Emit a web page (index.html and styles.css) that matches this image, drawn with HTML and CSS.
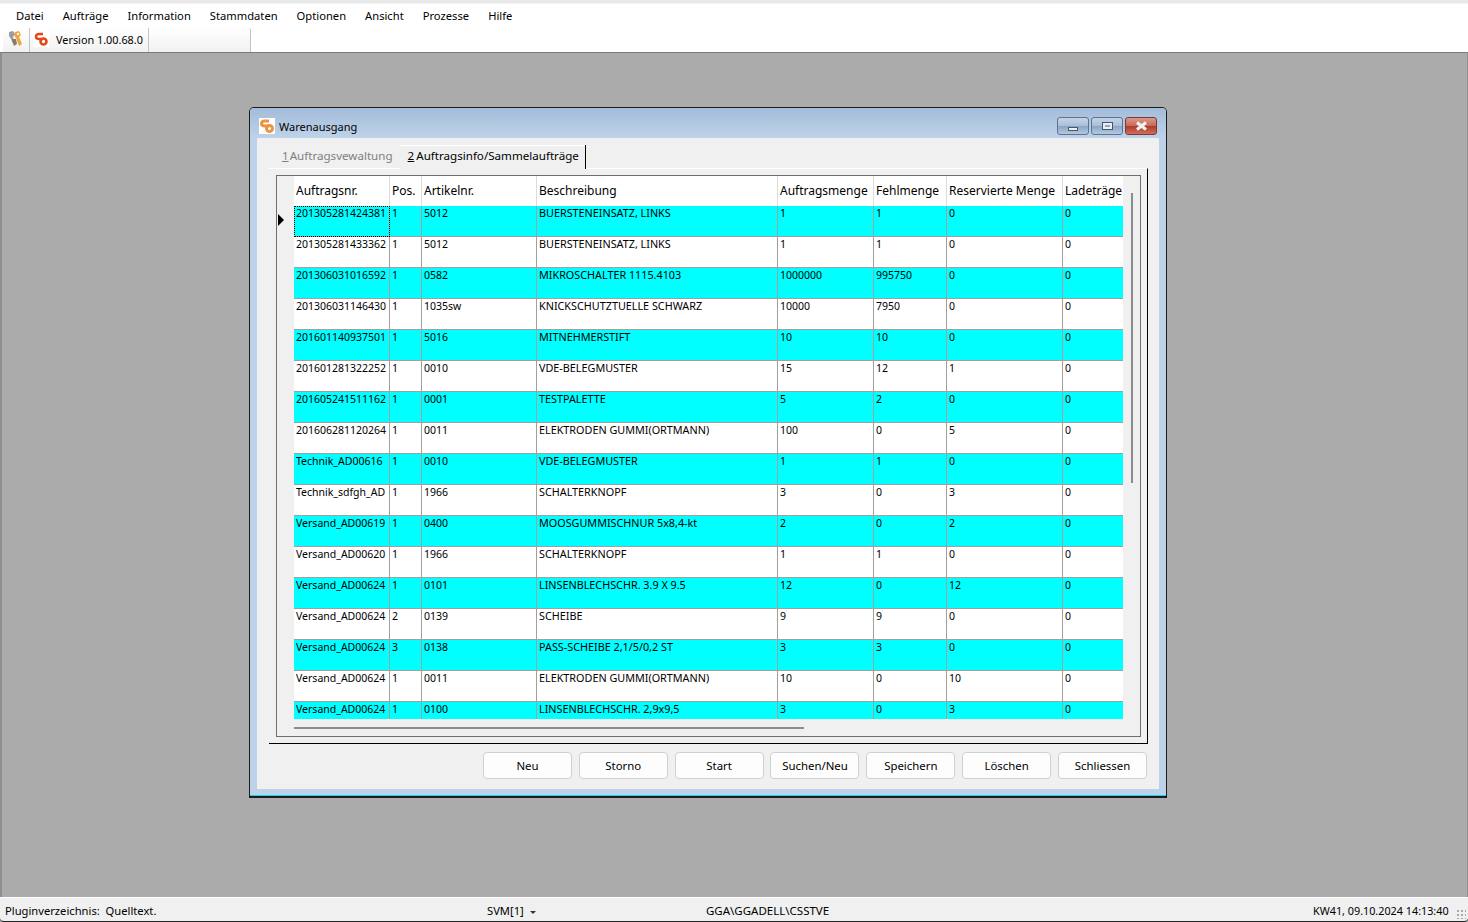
FILE: index.html
```html
<!DOCTYPE html>
<html lang="de">
<head>
    <meta charset="UTF-8">
    <title>Warenausgang</title>
    <link rel="stylesheet" href="styles.css">
</head>
<body>
    <!-- Menu -->
    <div class="menubar">
        <span>Datei</span><span>Aufträge</span><span>Information</span><span>Stammdaten</span>
        <span>Optionen</span><span>Ansicht</span><span>Prozesse</span><span>Hilfe</span>
    </div>

    <!-- Toolbar -->
    <div class="toolbar">
        <div class="toolstrip">
            <div class="toolcell first">
                <svg width="15" height="16" viewBox="0 0 15 16">
                    <path d="M1 1 L5 0 L7 3 L5 6 L7 12 L5 13 L3 8 L1 5 Z" fill="#9a9aa8"/>
                    <path d="M7 1 L11 0 L13 4 L11 6 L14 13 L11 15 L8 7 L6 4 Z" fill="#eda63e"/>
                    <path d="M4 8 L8 8 L9 13 L6 15 Z" fill="#8c7a62"/>
                    <path d="M9 2 L11 2 L11 4 L9 4 Z" fill="#fff"/>
                </svg>
            </div>
            <div class="toolcell version">
                <svg width="16" height="16" viewBox="0 0 16 16">
                    <rect width="16" height="16" fill="#fff"/>
                    <path d="M10 3 H6 Q3 3 3 5.5 Q3 8 6 8 H10" fill="none" stroke="#e2481c" stroke-width="2.6"/>
                    <circle cx="10.5" cy="10.5" r="3" fill="none" stroke="#e2481c" stroke-width="2.6"/>
                </svg>
                <span>Version 1.00.68.0</span>
            </div>
        </div>
    </div>

    <!-- MDI area -->
    <div class="mdi">
        <div class="window">
            <div class="titlebar">
                <svg class="appicon" width="16" height="16" viewBox="0 0 16 16">
                    <rect width="16" height="16" fill="#fff"/>
                    <path d="M10 3 H6 Q2.5 3 2.5 5.5 Q2.5 8 6 8 H10" fill="none" stroke="#ee9440" stroke-width="3"/>
                    <circle cx="10.5" cy="10.5" r="3" fill="none" stroke="#ee9440" stroke-width="3"/>
                </svg>
                <span class="title">Warenausgang</span>
                <div class="winbtns">
                    <div class="winbtn"><i class="min"></i></div>
                    <div class="winbtn"><i class="max"></i></div>
                    <div class="winbtn close">
                        <svg width="15" height="10" viewBox="0 0 15 10"><path d="M3 1.5 L12 8.5 M12 1.5 L3 8.5" stroke="#f2f2f2" stroke-width="3"/></svg>
                    </div>
                </div>
            </div>
            <div class="winbody">
                <div class="tabs">
                    <div class="tab"><u>1</u>Auftragsvewaltung</div>
                    <div class="tab active"><u>2</u>Auftragsinfo/Sammelaufträge</div>
                </div>
                <div class="tabpage">
                    <div class="grid">
                        <div class="rowhead"><i class="arrow"></i></div>
                        <div class="gridclip">
                            <table>
                                <colgroup>
                                    <col class="c1"><col class="c2"><col class="c3"><col class="c4">
                                    <col class="c5"><col class="c6"><col class="c7"><col class="c8">
                                </colgroup>
                                <thead>
                                    <tr><th>Auftragsnr.</th><th>Pos.</th><th>Artikelnr.</th><th>Beschreibung</th><th>Auftragsmenge</th><th>Fehlmenge</th><th>Reservierte Menge</th><th>Ladeträge</th></tr>
                                </thead>
                                <tbody>
                                    <tr class="hl"><td class="focus">201305281424381</td><td>1</td><td>5012</td><td>BUERSTENEINSATZ, LINKS</td><td>1</td><td>1</td><td>0</td><td>0</td></tr>
                                    <tr><td>201305281433362</td><td>1</td><td>5012</td><td>BUERSTENEINSATZ, LINKS</td><td>1</td><td>1</td><td>0</td><td>0</td></tr>
                                    <tr class="hl"><td>201306031016592</td><td>1</td><td>0582</td><td>MIKROSCHALTER 1115.4103</td><td>1000000</td><td>995750</td><td>0</td><td>0</td></tr>
                                    <tr><td>201306031146430</td><td>1</td><td>1035sw</td><td>KNICKSCHUTZTUELLE SCHWARZ</td><td>10000</td><td>7950</td><td>0</td><td>0</td></tr>
                                    <tr class="hl"><td>201601140937501</td><td>1</td><td>5016</td><td>MITNEHMERSTIFT</td><td>10</td><td>10</td><td>0</td><td>0</td></tr>
                                    <tr><td>201601281322252</td><td>1</td><td>0010</td><td>VDE-BELEGMUSTER</td><td>15</td><td>12</td><td>1</td><td>0</td></tr>
                                    <tr class="hl"><td>201605241511162</td><td>1</td><td>0001</td><td>TESTPALETTE</td><td>5</td><td>2</td><td>0</td><td>0</td></tr>
                                    <tr><td>201606281120264</td><td>1</td><td>0011</td><td>ELEKTRODEN GUMMI(ORTMANN)</td><td>100</td><td>0</td><td>5</td><td>0</td></tr>
                                    <tr class="hl"><td>Technik_AD00616</td><td>1</td><td>0010</td><td>VDE-BELEGMUSTER</td><td>1</td><td>1</td><td>0</td><td>0</td></tr>
                                    <tr><td>Technik_sdfgh_AD</td><td>1</td><td>1966</td><td>SCHALTERKNOPF</td><td>3</td><td>0</td><td>3</td><td>0</td></tr>
                                    <tr class="hl"><td>Versand_AD00619</td><td>1</td><td>0400</td><td>MOOSGUMMISCHNUR 5x8,4-kt</td><td>2</td><td>0</td><td>2</td><td>0</td></tr>
                                    <tr><td>Versand_AD00620</td><td>1</td><td>1966</td><td>SCHALTERKNOPF</td><td>1</td><td>1</td><td>0</td><td>0</td></tr>
                                    <tr class="hl"><td>Versand_AD00624</td><td>1</td><td>0101</td><td>LINSENBLECHSCHR. 3.9 X 9.5</td><td>12</td><td>0</td><td>12</td><td>0</td></tr>
                                    <tr><td>Versand_AD00624</td><td>2</td><td>0139</td><td>SCHEIBE</td><td>9</td><td>9</td><td>0</td><td>0</td></tr>
                                    <tr class="hl"><td>Versand_AD00624</td><td>3</td><td>0138</td><td>PASS-SCHEIBE 2,1/5/0,2 ST</td><td>3</td><td>3</td><td>0</td><td>0</td></tr>
                                    <tr><td>Versand_AD00624</td><td>1</td><td>0011</td><td>ELEKTRODEN GUMMI(ORTMANN)</td><td>10</td><td>0</td><td>10</td><td>0</td></tr>
                                    <tr class="hl"><td>Versand_AD00624</td><td>1</td><td>0100</td><td>LINSENBLECHSCHR. 2,9x9,5</td><td>3</td><td>0</td><td>3</td><td>0</td></tr>
                                </tbody>
                            </table>
                        </div>
                        <div class="vscroll"></div>
                        <div class="hscroll"></div>
                    </div>
                </div>
                <div class="buttons">
                    <button>Neu</button>
                    <button>Storno</button>
                    <button>Start</button>
                    <button>Suchen/Neu</button>
                    <button>Speichern</button>
                    <button>Löschen</button>
                    <button>Schliessen</button>
                </div>
            </div>
        </div>
    </div>

    <!-- Status bar -->
    <div class="statusbar">
        <span class="st-left">Pluginverzeichnis:&nbsp; Quelltext.</span>
        <span class="st-svm">SVM[1] <i class="caret"></i></span>
        <span class="st-user">GGA\GGADELL\CSSTVE</span>
        <span class="st-time">KW41, 09.10.2024 14:13:40</span>
        <span class="grip"></span>
    </div>
</body>
</html>
```

FILE: styles.css
```css
/* General styles */
body {
    margin: 0;
    height: 922px;
    overflow: hidden;
    display: flex;
    flex-direction: column;
    font-family: "Noto Sans", sans-serif;
    font-size: 11.2px;
    color: #000;
    background: #ababab;
}

/* Menu */
.menubar {
    height: 28px;
    box-sizing: border-box;
    padding: 3px 0 0 16px;
    display: flex;
    align-items: center;
    gap: 19px;
    background: linear-gradient(#e8e8e8 0, #e8e8e8 3px, #fff 4px);
}

/* Toolbar */
.toolbar {
    height: 25px;
    box-sizing: border-box;
    padding: 0 0 0 3px;
    display: flex;
    background: #fff;
    border-bottom: 1px solid #7a7a7a;
}

.toolstrip {
    width: 247px;
    display: flex;
    background: linear-gradient(#fff, #f1f1f1);
    border-radius: 3px 3px 0 0;
    border-right: 1px solid #c4c4c4;
}

.toolcell {
    display: flex;
    align-items: center;
    padding-bottom: 2px;
    border-right: 1px solid #c4c4c4;
    box-sizing: border-box;
}

.toolcell.first {
    width: 27px;
    padding-left: 5px;
}

.toolcell.version {
    width: 119px;
    padding-left: 3px;
    gap: 7px;
    white-space: nowrap;
    font-size: 10.85px;
}

/* MDI area */
.mdi {
    position: relative;
    flex: 1;
    background: #ababab;
    border-left: 2px solid #8f8f8f;
    border-right: 1px solid #8f8f8f;
}

/* Window */
.window {
    position: absolute;
    left: 247px;
    top: 54px;
    width: 918px;
    height: 691px;
    box-sizing: border-box;
    display: flex;
    flex-direction: column;
    border: 1px solid #1c1c1c;
    border-bottom: 2px solid #1c1c1c;
    border-radius: 5px 5px 0 0;
    background: #bdd2e9;
    box-shadow: inset 0 -1px 0 #19d3ee;
}

.titlebar {
    height: 30px;
    flex: none;
    box-sizing: border-box;
    display: flex;
    align-items: center;
    padding: 6px 0 0 9px;
    background: linear-gradient(#a3bcd8, #bed3ea);
    border-radius: 4px 4px 0 0;
}

.appicon {
    flex: none;
}

.title {
    margin-left: 4px;
    margin-top: 1px;
    font-size: 11px;
}

.winbtns {
    margin-left: auto;
    margin-right: 9px;
    display: flex;
    gap: 2px;
}

.winbtn {
    width: 32px;
    height: 18px;
    box-sizing: border-box;
    display: flex;
    align-items: center;
    justify-content: center;
    border: 1px solid #5c7491;
    border-radius: 3px;
    background: linear-gradient(#c3d4e7 0, #a9bfd8 50%, #8aa5c4 51%, #b4c9df 100%);
}

.winbtn.close {
    border-color: #7a3a32;
    background: linear-gradient(#d99a8e 0, #c9665a 50%, #b03a2a 51%, #cf6e5c 100%);
}

.min {
    width: 8px;
    height: 2px;
    margin-top: 6px;
    background: #eee;
    border: 1px solid #44576e;
}

.max {
    width: 5px;
    height: 2px;
    background: #8ea6c2;
    border: 2px solid #eee;
    outline: 1px solid #44576e;
}

.winbody {
    flex: 1;
    min-height: 0;
    margin: 0 7px 7px 7px;
    padding: 7px 11px 10px 12px;
    display: flex;
    flex-direction: column;
    background: #f0f0f0;
}

/* Tabs */
.tabs {
    height: 23px;
    flex: none;
    display: flex;
    padding-left: 6px;
    font-size: 11.6px;
}

.tab {
    padding: 3px 7px 0 7px;
    color: #808080;
}

.tab u {
    margin-right: 1px;
}

.tab.active {
    color: #000;
    height: 24px;
    box-sizing: border-box;
    padding: 3px 6px 0 8px;
    background: #f0f0f0;
    border-right: 1px solid #000;
    box-shadow: inset 0 1px 0 #fff;
    position: relative;
}

.tab.active u {
    margin-right: 2px;
}

.tabpage {
    flex: 1;
    min-height: 0;
    display: flex;
    padding: 6px 6px 6px 7px;
    border-top: 1px solid #fff;
    border-right: 1px solid #000;
    border-bottom: 1px solid #000;
}

/* Grid */
.grid {
    position: relative;
    flex: 1;
    min-width: 0;
    display: flex;
    border: 1px solid #6e6e6e;
    background: #f0f0f0;
    padding-bottom: 17px;
}

.rowhead {
    position: relative;
    width: 17px;
    flex: none;
}

.arrow {
    position: absolute;
    left: 1px;
    top: 38px;
    width: 0;
    height: 0;
    border-top: 6px solid transparent;
    border-bottom: 6px solid transparent;
    border-left: 6px solid #000;
}

.gridclip {
    overflow: hidden;
    width: 829px;
    flex: none;
}

table {
    table-layout: fixed;
    width: 829px;
    border-collapse: separate;
    border-spacing: 0;
}

.c1 { width: 96px; }
.c2 { width: 32px; }
.c3 { width: 115px; }
.c4 { width: 241px; }
.c5 { width: 96px; }
.c6 { width: 73px; }
.c7 { width: 116px; }
.c8 { width: 60px; }

th {
    height: 30px;
    box-sizing: border-box;
    padding: 0 0 2px 2px;
    font-weight: 400;
    font-size: 12px;
    text-align: left;
    white-space: nowrap;
    overflow: hidden;
    background: #fff;
    border-right: 1px solid #dcdcdc;
}

td {
    height: 31px;
    box-sizing: border-box;
    padding: 0 0 0 2px;
    vertical-align: top;
    font-size: 10.5px;
    line-height: 14px;
    white-space: nowrap;
    overflow: hidden;
    background: #fff;
    border-right: 1px solid #a0a0a0;
    border-bottom: 1px solid #a0a0a0;
}

td:nth-child(4) {
    font-size: 10.8px;
}

th:last-child,
td:last-child {
    border-right: none;
}

.hl td {
    background: #00ffff;
}

td.focus {
    outline: 1px dotted #000;
    outline-offset: -1px;
}

/* Scrollbars */
.vscroll {
    position: absolute;
    left: 854px;
    top: 17px;
    width: 2px;
    height: 290px;
    background: #8c8c8c;
}

.hscroll {
    position: absolute;
    left: 17px;
    top: 551px;
    width: 510px;
    height: 2px;
    background: #8c8c8c;
}

/* Buttons */
.buttons {
    flex: none;
    height: 35px;
    display: flex;
    justify-content: flex-end;
    align-items: flex-start;
    gap: 6.85px;
    padding: 8px 1px 0 0;
    box-sizing: border-box;
}

button {
    width: 89px;
    height: 27px;
    padding: 0;
    font-family: inherit;
    font-size: 11.4px;
    color: #000;
    background: #fdfdfd;
    border: 1px solid #d0d0d0;
    border-radius: 4px;
}

/* Status bar */
.statusbar {
    position: relative;
    height: 25px;
    flex: none;
    box-sizing: border-box;
    display: flex;
    align-items: center;
    padding-top: 2px;
    background: #f0f0f0;
    border-top: 1px solid #fff;
    border-bottom: 1px solid #222;
    border-radius: 0 0 4px 4px;
}

.st-left {
    width: 487px;
    box-sizing: border-box;
    padding-left: 5px;
}

.st-svm {
    width: 219px;
}

.caret {
    display: inline-block;
    margin: 0 0 1px 3px;
    border-left: 3px solid transparent;
    border-right: 3px solid transparent;
    border-top: 3px solid #333;
}

.st-user {
    width: 607px;
    font-size: 11.5px;
}

.st-time {
    white-space: nowrap;
    font-size: 10.8px;
}

.grip {
    position: absolute;
    right: 2px;
    bottom: 2px;
    width: 10px;
    height: 10px;
    background: radial-gradient(circle, #a8a8a8 1px, transparent 1px) 0 0 / 4px 4px;
}
```
